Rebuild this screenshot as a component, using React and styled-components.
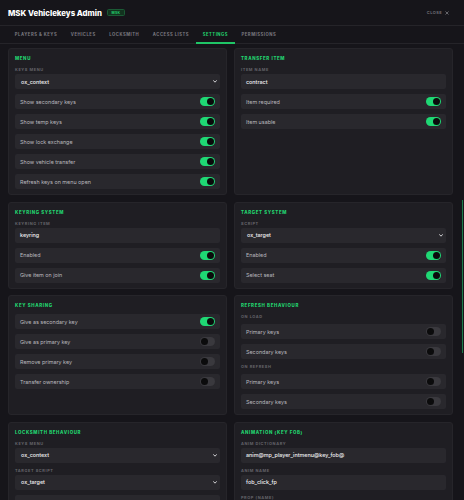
import React from "react";
import styled, { createGlobalStyle } from "styled-components";

const Global = createGlobalStyle`
  html, body { margin: 0; padding: 0; background: #16151a; overflow: hidden; }
  body { font-family: Inter, "Open Sans", "Liberation Sans", sans-serif; color: #e6e6e8; }
  * { box-sizing: border-box; }
`;

const Shell = styled.div`
  width: 464px;
  height: 500px;
  display: flex;
  flex-direction: column;
  background: #16151a;
  overflow: hidden;
`;

const Header = styled.header`
  height: 26px;
  flex: none;
  display: flex;
  align-items: center;
  justify-content: space-between;
  padding: 0 15px 0 8px;
  border-bottom: 1px solid #252429;
`;

const TitleGroup = styled.div`
  display: flex;
  align-items: center;
  gap: 5px;
`;

const Title = styled.h1`
  margin: 0;
  font-size: 7.8px;
  font-weight: 800;
  color: #ffffff;
  letter-spacing: 0;
`;

const Badge = styled.span`
  display: inline-flex;
  align-items: center;
  height: 7px;
  padding: 0 3.5px;
  border-radius: 1.5px;
  background: #12331f;
  border: 0.5px solid #1b5a35;
  color: #22d46f;
  font-size: 3.4px;
  font-weight: 700;
  letter-spacing: 0.3px;
`;

const CloseButton = styled.button`
  display: flex;
  align-items: center;
  gap: 3px;
  background: none;
  border: none;
  padding: 0;
  color: #75747a;
  font-family: inherit;
  font-size: 4px;
  font-weight: 600;
  letter-spacing: 0.4px;
`;

const Tabs = styled.nav`
  height: 18px;
  flex: none;
  display: flex;
  padding: 0 8px;
  border-bottom: 1px solid #252429;
`;

const Tab = styled.div`
  display: flex;
  align-items: center;
  padding: 1px 6.8px 0;
  margin-bottom: -1px;
  font-size: 4.2px;
  font-weight: 700;
  letter-spacing: 0.52px;
  color: ${(p) => (p.$active ? "#22d46f" : "#7c7b81")};
  border-bottom: 2px solid ${(p) => (p.$active ? "#1fc566" : "transparent")};
`;

const Body = styled.div`
  flex: 1;
  min-height: 0;
  display: flex;
`;

const Main = styled.main`
  flex: 1;
  min-width: 0;
  padding: 4px 8px 0;
  overflow: hidden;
`;

const ScrollTrack = styled.div`
  width: 3px;
  flex: none;
  padding-top: 156px;
  display: flex;
  justify-content: center;
`;

const ScrollThumb = styled.div`
  width: 1px;
  height: 153px;
  background: #1d7a4a;
`;

const Grid = styled.div`
  display: grid;
  grid-template-columns: 1fr 1fr;
  column-gap: 7px;
  row-gap: 6.5px;
`;

const Card = styled.section`
  background: #1f1e23;
  border: 1px solid #26252a;
  border-radius: 3px;
  padding: 6px 6px 5px;
  display: flex;
  flex-direction: column;
  gap: 5px;
`;

const CardTitle = styled.h2`
  margin: 0;
  height: 7px;
  line-height: 7px;
  font-size: 4.4px;
  font-weight: 800;
  letter-spacing: 0.65px;
  text-transform: uppercase;
  color: #22d46f;
`;

const Label = styled.div`
  height: 5px;
  line-height: 5px;
  font-size: 3.9px;
  font-weight: 700;
  letter-spacing: 0.6px;
  text-transform: uppercase;
  color: #65646a;
`;

const FieldGroup = styled.div`
  display: flex;
  flex-direction: column;
  gap: 2px;
`;

const Box = styled.div`
  height: 15px;
  border-radius: 2px;
  background: #29282d;
  display: flex;
  align-items: center;
  justify-content: space-between;
  padding: 0 ${(p) => (p.$select ? "3px 0 6px" : "5px")};
  font-size: 5.4px;
`;

const Value = styled.span`
  color: #f2f2f4;
  font-weight: 500;
`;

const RowText = styled.span`
  color: #b9b8bd;
  font-weight: 400;
`;

const Toggle = styled.span`
  width: 15px;
  height: 9px;
  border-radius: 4.5px;
  background: ${(p) => (p.$on ? "#1fd874" : "#3a393e")};
  display: flex;
  align-items: center;
  justify-content: ${(p) => (p.$on ? "flex-end" : "flex-start")};
  padding: 0 1px;
  &::after {
    content: "";
    width: 7px;
    height: 7px;
    border-radius: 50%;
    background: #0b0b0c;
  }
`;

const Chevron = () => (
  <svg width="4" height="3" viewBox="0 0 8 6" fill="none">
    <path d="M1 1.2 L4 4.4 L7 1.2" stroke="#e8e8ea" strokeWidth="1.8" strokeLinecap="round" strokeLinejoin="round" />
  </svg>
);

const CloseIcon = () => (
  <svg width="4" height="4" viewBox="0 0 8 8" fill="none">
    <path d="M1.5 1.5 L6.5 6.5 M6.5 1.5 L1.5 6.5" stroke="#8a898f" strokeWidth="1.4" strokeLinecap="round" />
  </svg>
);

const SwitchRow = ({ label, on }) => (
  <Box>
    <RowText>{label}</RowText>
    <Toggle $on={on} />
  </Box>
);

const SelectField = ({ label, value }) => (
  <FieldGroup>
    <Label>{label}</Label>
    <Box $select>
      <Value>{value}</Value>
      <Chevron />
    </Box>
  </FieldGroup>
);

const InputField = ({ label, value }) => (
  <FieldGroup>
    <Label>{label}</Label>
    <Box>
      <Value>{value}</Value>
    </Box>
  </FieldGroup>
);

const tabs = ["Players & Keys", "Vehicles", "Locksmith", "Access Lists", "Settings", "Permissions"];

export default function App() {
  return (
    <>
      <Global />
      <Shell>
        <Header>
          <TitleGroup>
            <Title>MSK Vehiclekeys Admin</Title>
            <Badge>MSK</Badge>
          </TitleGroup>
          <CloseButton>
            CLOSE <CloseIcon />
          </CloseButton>
        </Header>
        <Tabs>
          {tabs.map((t) => (
            <Tab key={t} $active={t === "Settings"}>
              {t.toUpperCase()}
            </Tab>
          ))}
        </Tabs>
        <Body>
          <Main>
            <Grid>
              <Card>
                <CardTitle>Menu</CardTitle>
                <SelectField label="Keys menu" value="ox_context" />
                <SwitchRow label="Show secondary keys" on />
                <SwitchRow label="Show temp keys" on />
                <SwitchRow label="Show lock exchange" on />
                <SwitchRow label="Show vehicle transfer" on />
                <SwitchRow label="Refresh keys on menu open" on />
              </Card>
              <Card>
                <CardTitle>Transfer item</CardTitle>
                <InputField label="Item name" value="contract" />
                <SwitchRow label="Item required" on />
                <SwitchRow label="Item usable" on />
              </Card>

              <Card>
                <CardTitle>Keyring system</CardTitle>
                <InputField label="Keyring item" value="keyring" />
                <SwitchRow label="Enabled" on />
                <SwitchRow label="Give item on join" on />
              </Card>
              <Card>
                <CardTitle>Target system</CardTitle>
                <SelectField label="Script" value="ox_target" />
                <SwitchRow label="Enabled" on />
                <SwitchRow label="Select seat" on />
              </Card>

              <Card>
                <CardTitle>Key sharing</CardTitle>
                <SwitchRow label="Give as secondary key" on />
                <SwitchRow label="Give as primary key" />
                <SwitchRow label="Remove primary key" />
                <SwitchRow label="Transfer ownership" />
              </Card>
              <Card>
                <CardTitle>Refresh behaviour</CardTitle>
                <Label>On load</Label>
                <SwitchRow label="Primary keys" />
                <SwitchRow label="Secondary keys" />
                <Label>On refresh</Label>
                <SwitchRow label="Primary keys" />
                <SwitchRow label="Secondary keys" />
              </Card>

              <Card>
                <CardTitle>Locksmith behaviour</CardTitle>
                <SelectField label="Keys menu" value="ox_context" />
                <SelectField label="Target script" value="ox_target" />
                <Box />
              </Card>
              <Card>
                <CardTitle>Animation (key fob)</CardTitle>
                <InputField label="Anim dictionary" value="anim@mp_player_intmenu@key_fob@" />
                <InputField label="Anim name" value="fob_click_fp" />
                <InputField label="Prop (name)" value="lr_prop_carkey_fob" />
              </Card>
            </Grid>
          </Main>
          <ScrollTrack>
            <ScrollThumb />
          </ScrollTrack>
        </Body>
      </Shell>
    </>
  );
}
